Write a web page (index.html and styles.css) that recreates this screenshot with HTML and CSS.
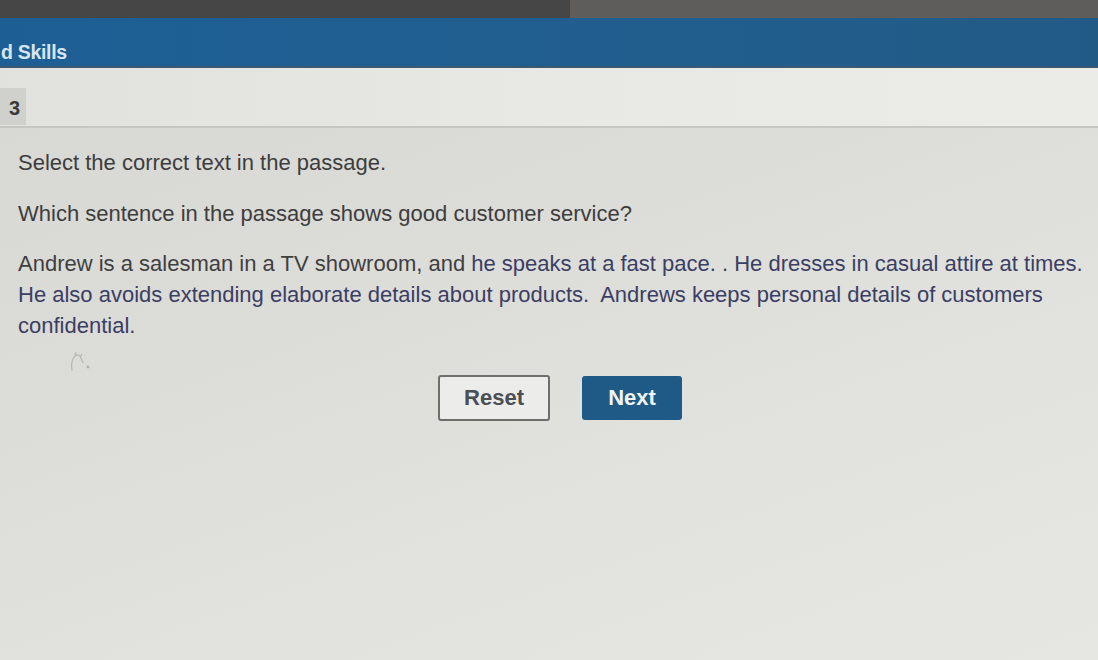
FILE: index.html
```html
<!DOCTYPE html>
<html lang="en">
<head>
  <meta charset="UTF-8">
  <meta name="viewport" content="width=device-width, initial-scale=1.0">
  <title>Skills - Question 3</title>
  <link rel="stylesheet" href="styles.css">
</head>
<body>
  <!-- Browser chrome strip -->
  <div class="top-strip">
    <div class="strip-left"></div>
    <div class="strip-right"></div>
  </div>

  <!-- Course title bar -->
  <div class="title-bar">d Skills</div>

  <!-- Question number -->
  <div class="question-head">
    <div class="question-num">3</div>
  </div>

  <div class="question-body">
    <p class="instruction">Select the correct text in the passage.</p>
    <p class="prompt">Which sentence in the passage shows good customer service?</p>

    <p class="passage">
      Andrew is a salesman in a TV showroom, and <span class="pick">he speaks at a fast pace.</span> . <span class="pick">He dresses in casual attire at times.</span>
      <span class="pick">He also avoids extending elaborate details about products.</span>&nbsp; <span class="pick">Andrews keeps personal details of customers confidential.</span>
    </p>

    <div class="cursor-mark">
      <svg width="30" height="26" viewBox="0 0 30 26">
        <path d="M6 22 C5 16 6 10 9 7 C11 5 14 6 15 9 L17 14 M9 7 L10 3 M14 8 L16 5" fill="none" stroke="#b9b9b6" stroke-width="1.3"/>
        <circle cx="22" cy="18" r="1.4" fill="#b0b0ad"/>
      </svg>
    </div>

    <div class="button-row">
      <button class="btn btn-reset">Reset</button>
      <button class="btn btn-next">Next</button>
    </div>
  </div>
</body>
</html>
```

FILE: styles.css
```css
/* Page base */
body {
  margin: 0;
  padding: 0;
  width: 1098px;
  height: 660px;
  overflow: hidden;
  font-family: 'Liberation Sans', Arial, sans-serif;
  background: linear-gradient(160deg, #d6d6d3 0%, #dcdcd9 40%, #e2e2de 70%, #e6e6e2 100%);
}

/* Dark strip at the very top */
.top-strip {
  display: flex;
  height: 18px;
}

.strip-left {
  width: 570px;
  background-color: #474646;
}

.strip-right {
  flex: 1;
  background-color: #5e5d5c;
}

/* Blue title bar */
.title-bar {
  height: 50px;
  box-sizing: border-box;
  padding: 23px 0 0 1px;
  background: linear-gradient(90deg, #1d5f95 0%, #215e8e 60%, #225a86 100%);
  color: #d9e6f1;
  font-weight: bold;
  font-size: 19.5px;
  letter-spacing: -0.3px;
  border-bottom: 2px solid #3b5a72;
}

/* Question number band */
.question-head {
  height: 60px;
  box-sizing: border-box;
  padding-top: 20px;
  background: linear-gradient(90deg, #e1e1de 0%, #e9e9e5 60%, #ebebe7 100%);
  border-bottom: 2px solid #c6c6c2;
}

.question-num {
  width: 26px;
  height: 37px;
  box-sizing: border-box;
  padding: 9px 0 0 9px;
  background-color: #d0d0cd;
  color: #3a3a3a;
  font-weight: bold;
  font-size: 20px;
}

/* Question content */
.question-body {
  padding: 0 0 0 18px;
}

.instruction {
  margin: 22px 0 0 0;
  font-size: 22px;
  color: #3d3d3d;
}

.prompt {
  margin: 25px 0 0 0;
  font-size: 22px;
  color: #3d3d3d;
}

.passage {
  width: 1080px;
  margin: 21px 0 0 0;
  font-size: 22px;
  line-height: 31px;
  color: #3f3f40;
}

.pick {
  color: #3b3e63;
}

/* Faint hint mark below the passage */
.cursor-mark {
  height: 24px;
  padding: 8px 0 0 48px;
}

/* Reset / Next buttons */
.button-row {
  display: flex;
  justify-content: center;
  align-items: center;
  gap: 32px;
  margin-top: 2px;
  padding-left: 4px;
}

.btn {
  font-family: 'Liberation Sans', Arial, sans-serif;
  font-weight: bold;
  font-size: 22px;
  border-radius: 3px;
  cursor: pointer;
}

.btn-reset {
  width: 112px;
  height: 46px;
  background-color: #ececea;
  border: 2px solid #6e6e6e;
  color: #4a4e55;
}

.btn-next {
  width: 100px;
  height: 44px;
  background-color: #1f5a86;
  border: none;
  color: #f2f4f6;
}
```
